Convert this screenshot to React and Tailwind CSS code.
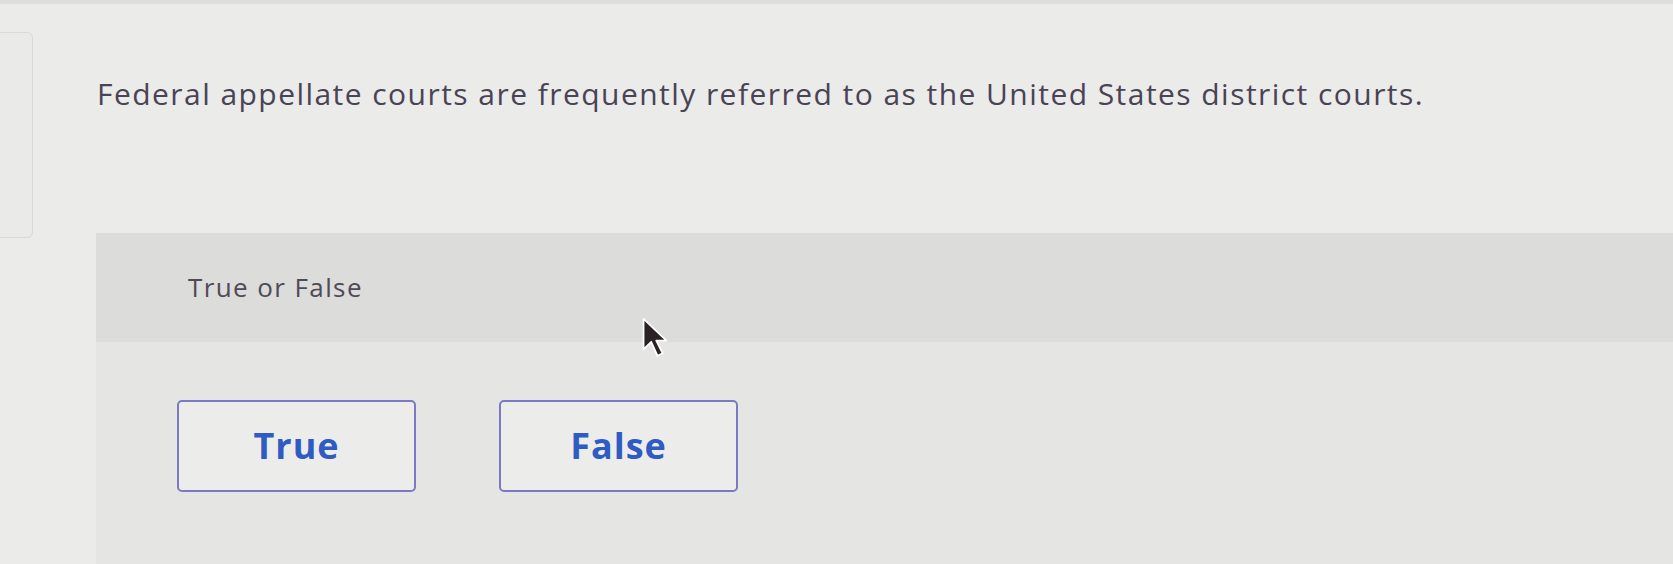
export default function App() {
  const choices = ["True", "False"];

  return (
    <div className="relative flex min-h-[564px] w-full overflow-hidden border-t-4 border-[#dedfdc] bg-[#ebebe9] font-['Open_Sans',sans-serif]">
      <aside className="w-[96px] shrink-0">
        <div className="mt-[28px] h-[206px] w-[33px] rounded-r-md border border-l-0 border-[#d9d9d6] bg-[#eaeae8]" />
      </aside>

      <main className="flex flex-1 flex-col">
        <h1 className="mt-[72px] pl-px text-[30px] leading-[36px] font-medium tracking-[1.45px] text-[#4a4356]">
          Federal appellate courts are frequently referred to as the United States district courts.
        </h1>

        <section className="mt-[121px] flex flex-1 flex-col bg-[#e5e5e3]">
          <div className="h-[109px] bg-[#dcdcda] pl-[92px] pt-[38px]">
            <p className="text-[26px] leading-[32px] tracking-[1.4px] text-[#4f4a58]">True or False</p>
          </div>

          <div className="flex gap-[83px] pl-[81px] pt-[58px]">
            {choices.map((choice) => (
              <button
                key={choice}
                type="button"
                className="flex h-[92px] w-[239px] items-center justify-center rounded-[5px] border-2 border-[#7b78c4] bg-[#ecedeb] text-[36px] font-bold tracking-[1px] text-[#2f5cc2]"
              >
                {choice}
              </button>
            ))}
          </div>
        </section>
      </main>

      <svg
        className="absolute left-[641px] top-[312px]"
        width="28"
        height="44"
        viewBox="0 0 22 34"
      >
        <path
          d="M2 2 L2 26 L8 20 L13 31 L17 29 L12 19 L20 19 Z"
          fill="#2b2226"
          stroke="#ffffff"
          strokeWidth="1.4"
          strokeLinejoin="round"
        />
      </svg>
    </div>
  );
}
